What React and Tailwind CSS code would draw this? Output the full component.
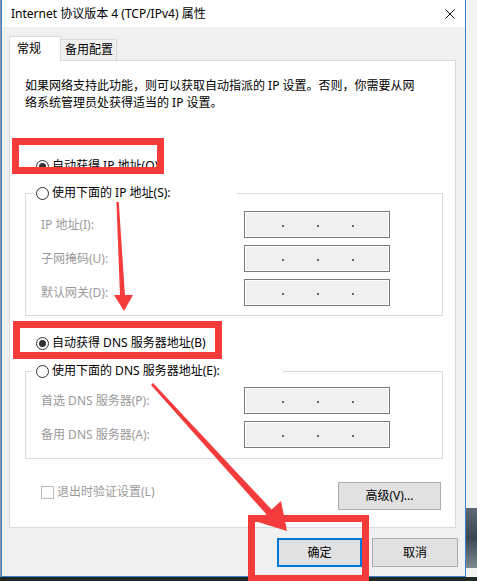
import React from 'react';

// Windows 10 "Internet 协议版本 4 (TCP/IPv4) 属性" dialog with red annotations

const Radio = ({ checked, label }) => (
    <div className="flex items-center h-[18px]">
        <span className="flex items-center justify-center w-[13px] h-[13px] rounded-full border border-[#333] bg-white">
            {checked && <span className="w-[7px] h-[7px] rounded-full bg-[#333]" />}
        </span>
        <span className="ml-[3px] text-[12px] leading-[18px] text-black whitespace-nowrap">{label}</span>
    </div>
);

const IpBox = () => (
    <div className="flex items-center w-[146px] h-[27px] pt-[3px] pl-[37px] gap-[33px] border border-[#7a7a7a] bg-[#f0f0f0] shadow-[inset_0_0_0_1px_#fff]">
        <span className="w-[2px] h-[2px] bg-[#666]" />
        <span className="w-[2px] h-[2px] bg-[#666]" />
        <span className="w-[2px] h-[2px] bg-[#666]" />
    </div>
);

const Field = ({ label }) => (
    <div className="flex items-center">
        <span className="w-[218px] pl-[15px] text-[12px] leading-[18px] text-[#9a9a9a] whitespace-nowrap">{label}</span>
        <IpBox />
    </div>
);

const App = () => {
    return (
        <div className="relative w-[477px] h-[581px] overflow-hidden bg-[#1f2a25] font-['Noto_Sans','Noto_Sans_CJK_SC',sans-serif] flex flex-col">
            <div className="flex h-[577px]">
                {/* desktop sliver on the left */}
                <div className="w-[1px] bg-[#8a96a0]" />

                {/* Dialog window */}
                <div className="w-[465px] flex flex-col border-x border-b border-[#3a80cc]">
                    {/* Title bar */}
                    <div className="h-[27px] bg-white flex items-center justify-between pl-[9px]">
                        <span className="text-[12px] leading-[16px] text-black whitespace-nowrap">Internet 协议版本 4 (TCP/IPv4) 属性</span>
                        <svg width="10" height="10" viewBox="0 0 10 10" className="mr-[10px]">
                            <path d="M0.5 0.5 L9.5 9.5 M9.5 0.5 L0.5 9.5" stroke="#111" strokeWidth="1" />
                        </svg>
                    </div>

                    {/* Body */}
                    <div className="flex-1 bg-[#f0f0f0] px-[7px] pt-[9px] flex flex-col">
                        {/* Tabs */}
                        <div className="flex items-end h-[24px]">
                            <div className="relative z-10 h-[25px] -mb-px w-[52px] pl-[7px] flex items-center bg-white border-t border-x border-[#d9d9d9] text-[12px] text-black">
                                常规
                            </div>
                            <div className="h-[21px] w-[56px] pl-[4px] flex items-center bg-[#f0f0f0] border-t border-r border-[#d9d9d9] text-[12px] text-black whitespace-nowrap">
                                备用配置
                            </div>
                        </div>

                        {/* Panel */}
                        <div className="w-[447px] h-[468px] bg-white border border-[#d9d9d9] flex flex-col">
                            <p className="mt-[16px] pl-[15px] text-[12px] leading-[17px] text-black">
                                如果网络支持此功能，则可以获取自动指派的 IP 设置。否则，你需要从网<br />
                                络系统管理员处获得适当的 IP 设置。
                            </p>

                            <div className="mt-[46px] ml-[26px]">
                                <Radio checked label="自动获得 IP 地址(O)" />
                            </div>

                            <div className="relative z-10 mt-[9px] ml-[23px] pl-[3px] w-[203px] bg-white">
                                <Radio label="使用下面的 IP 地址(S):" />
                            </div>
                            <div className="-mt-[9px] ml-[15px] w-[418px] border border-[#dcdcdc] pt-[17px] pb-[9px] flex flex-col gap-[7px]">
                                <Field label="IP 地址(I):" />
                                <Field label="子网掩码(U):" />
                                <Field label="默认网关(D):" />
                            </div>

                            <div className="mt-[18px] ml-[26px]">
                                <Radio checked label="自动获得 DNS 服务器地址(B)" />
                            </div>

                            <div className="relative z-10 mt-[10px] ml-[23px] pl-[3px] w-[250px] bg-white">
                                <Radio label="使用下面的 DNS 服务器地址(E):" />
                            </div>
                            <div className="-mt-[9px] ml-[15px] w-[418px] border border-[#dcdcdc] pt-[15px] pb-[10px] flex flex-col gap-[7px]">
                                <Field label="首选 DNS 服务器(P):" />
                                <Field label="备用 DNS 服务器(A):" />
                            </div>

                            <div className="mt-[23px] pl-[31px] pr-[14px] flex items-start justify-between">
                                <div className="mt-[1px] h-[18px] flex items-center">
                                    <span className="w-[13px] h-[13px] border border-[#bcbcbc] bg-white" />
                                    <span className="ml-[3px] text-[12px] leading-[18px] text-[#9a9a9a]">退出时验证设置(L)</span>
                                </div>
                                <button className="w-[103px] h-[28px] border border-[#adadad] bg-[#e1e1e1] text-[12px] text-black">
                                    高级(V)...
                                </button>
                            </div>
                        </div>

                        {/* Dialog buttons */}
                        <div className="mt-[10px] flex justify-end gap-[10px]">
                            <button className="w-[85px] h-[29px] border-2 border-[#0078d7] bg-[#e1e1e1] text-[12px] text-black">确定</button>
                            <button className="w-[86px] h-[29px] border border-[#adadad] bg-[#e1e1e1] text-[12px] text-black">取消</button>
                        </div>
                    </div>
                </div>

                {/* desktop sliver on the right */}
                <div className="w-[11px] flex flex-col bg-[#f4f4f4]">
                    <div className="h-[508px]" />
                    <div className="h-[60px] bg-gradient-to-b from-[#5d6a74] via-[#3b4852] to-[#7d8a92]" />
                </div>
            </div>

            {/* Annotation overlays */}
            <div className="absolute left-[12px] top-[138px] w-[152px] h-[36px] border-[7px] border-[#f33b3b] pointer-events-none" />
            <div className="absolute left-[13px] top-[321px] w-[209px] h-[38px] border-[7px] border-[#f33b3b] pointer-events-none" />
            <div className="absolute left-[248px] top-[515px] w-[121px] h-[67px] border-[7px] border-[#f33b3b] pointer-events-none" />

            <svg className="absolute inset-0 pointer-events-none" width="477" height="581" viewBox="0 0 477 581">
                {/* arrow 1 */}
                <polygon points="116,190 118,190 125,296 120,296" fill="#f33b3b" />
                <polygon points="114,295 133,295 124,311" fill="#f33b3b" />
                {/* arrow 2 */}
                <polygon points="151,385 153,383 272,510 267,515" fill="#f33b3b" />
                <polygon points="258,522 281,501 287,531" fill="#f33b3b" />
            </svg>
        </div>
    );
};

export default App;
